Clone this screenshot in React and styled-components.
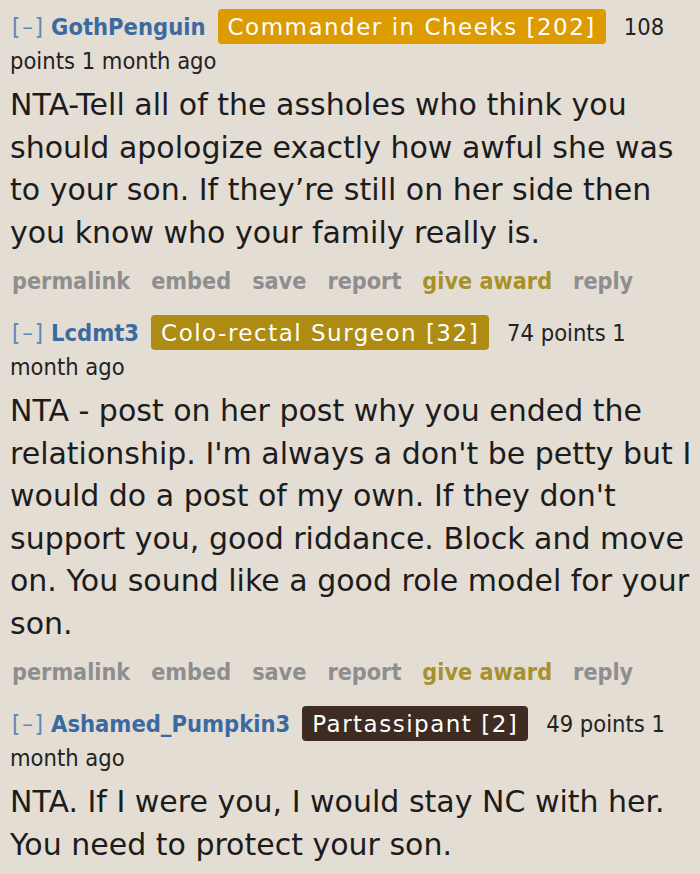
import React from 'react'
import styled, { createGlobalStyle } from 'styled-components'

const GlobalStyle = createGlobalStyle`
    html, body {
        margin: 0;
        padding: 0;
        background-color: #e3ddd4;
    }
`

const comments = [
    {
        author: 'GothPenguin',
        flair: 'Commander in Cheeks [202]',
        flairColor: '#dd9b02',
        points: '108 points 1 month ago',
        body: 'NTA-Tell all of the assholes who think you should apologize exactly how awful she was to your son. If they\u2019re still on her side then you know who your family really is.',
        actions: true,
    },
    {
        author: 'Lcdmt3',
        flair: 'Colo-rectal Surgeon [32]',
        flairColor: '#ae8c13',
        points: '74 points 1 month ago',
        body: "NTA - post on her post why you ended the relationship. I'm always a don't be petty but I would do a post of my own. If they don't support you, good riddance. Block and move on. You sound like a good role model for your son.",
        actions: true,
    },
    {
        author: 'Ashamed_Pumpkin3',
        flair: 'Partassipant [2]',
        flairColor: '#3e2b22',
        points: '49 points 1 month ago',
        body: 'NTA. If I were you, I would stay NC with her. You need to protect your son.',
        actions: false,
    },
]

const App = () => {
    return (
        <>
            <GlobalStyle />
            <Page>
                {comments.map((c) => (
                    <Comment key={c.author}>
                        <Tagline>
                            <Toggle>[–]</Toggle>
                            <Author>{c.author}</Author>
                            <Flair $bg={c.flairColor}>{c.flair}</Flair>
                            <Score>{c.points}</Score>
                        </Tagline>
                        <Body>{c.body}</Body>
                        {c.actions && (
                            <Actions>
                                <Action>permalink</Action>
                                <Action>embed</Action>
                                <Action>save</Action>
                                <Action>report</Action>
                                <Action $gold>give award</Action>
                                <Action>reply</Action>
                            </Actions>
                        )}
                    </Comment>
                ))}
            </Page>
        </>
    )
}

export default App

const Page = styled.div`
    padding: 10px 6px 0 10px;
    width: 700px;
    box-sizing: border-box;
`

const Comment = styled.div`
    margin-bottom: 15px;
`

const Tagline = styled.div`
    font-family: "DejaVu Sans Condensed", "DejaVu Sans", sans-serif;
    font-size: 23.5px;
    line-height: 34px;
    color: #222;
`

const Toggle = styled.span`
    color: #5b87b8;
    letter-spacing: 2px;
    margin-left: 2px;
    margin-right: 6px;
`

const Author = styled.span`
    color: #3b6aa0;
    font-weight: bold;
    margin-right: 12px;
`

const Flair = styled.span`
    font-family: "DejaVu Sans", sans-serif;
    background-color: ${(p) => p.$bg};
    color: #fff;
    font-size: 23px;
    letter-spacing: 1.5px;
    padding: 5px 10px 4px 10px;
    border-radius: 4px;
    margin-right: 18px;
`

const Score = styled.span``

const Body = styled.div`
    font-family: "DejaVu Sans", Verdana, sans-serif;
    font-size: 30px;
    line-height: 42.5px;
    color: #1c1c1c;
    margin-top: 6px;
`

const Actions = styled.div`
    display: flex;
    gap: 21px;
    margin-top: 7px;
    margin-left: 2px;
    font-family: "DejaVu Sans Condensed", "DejaVu Sans", sans-serif;
    font-size: 23.2px;
    font-weight: bold;
    line-height: 40px;
`

const Action = styled.span`
    color: ${(p) => (p.$gold ? '#a6912b' : '#8e8e8e')};
`
